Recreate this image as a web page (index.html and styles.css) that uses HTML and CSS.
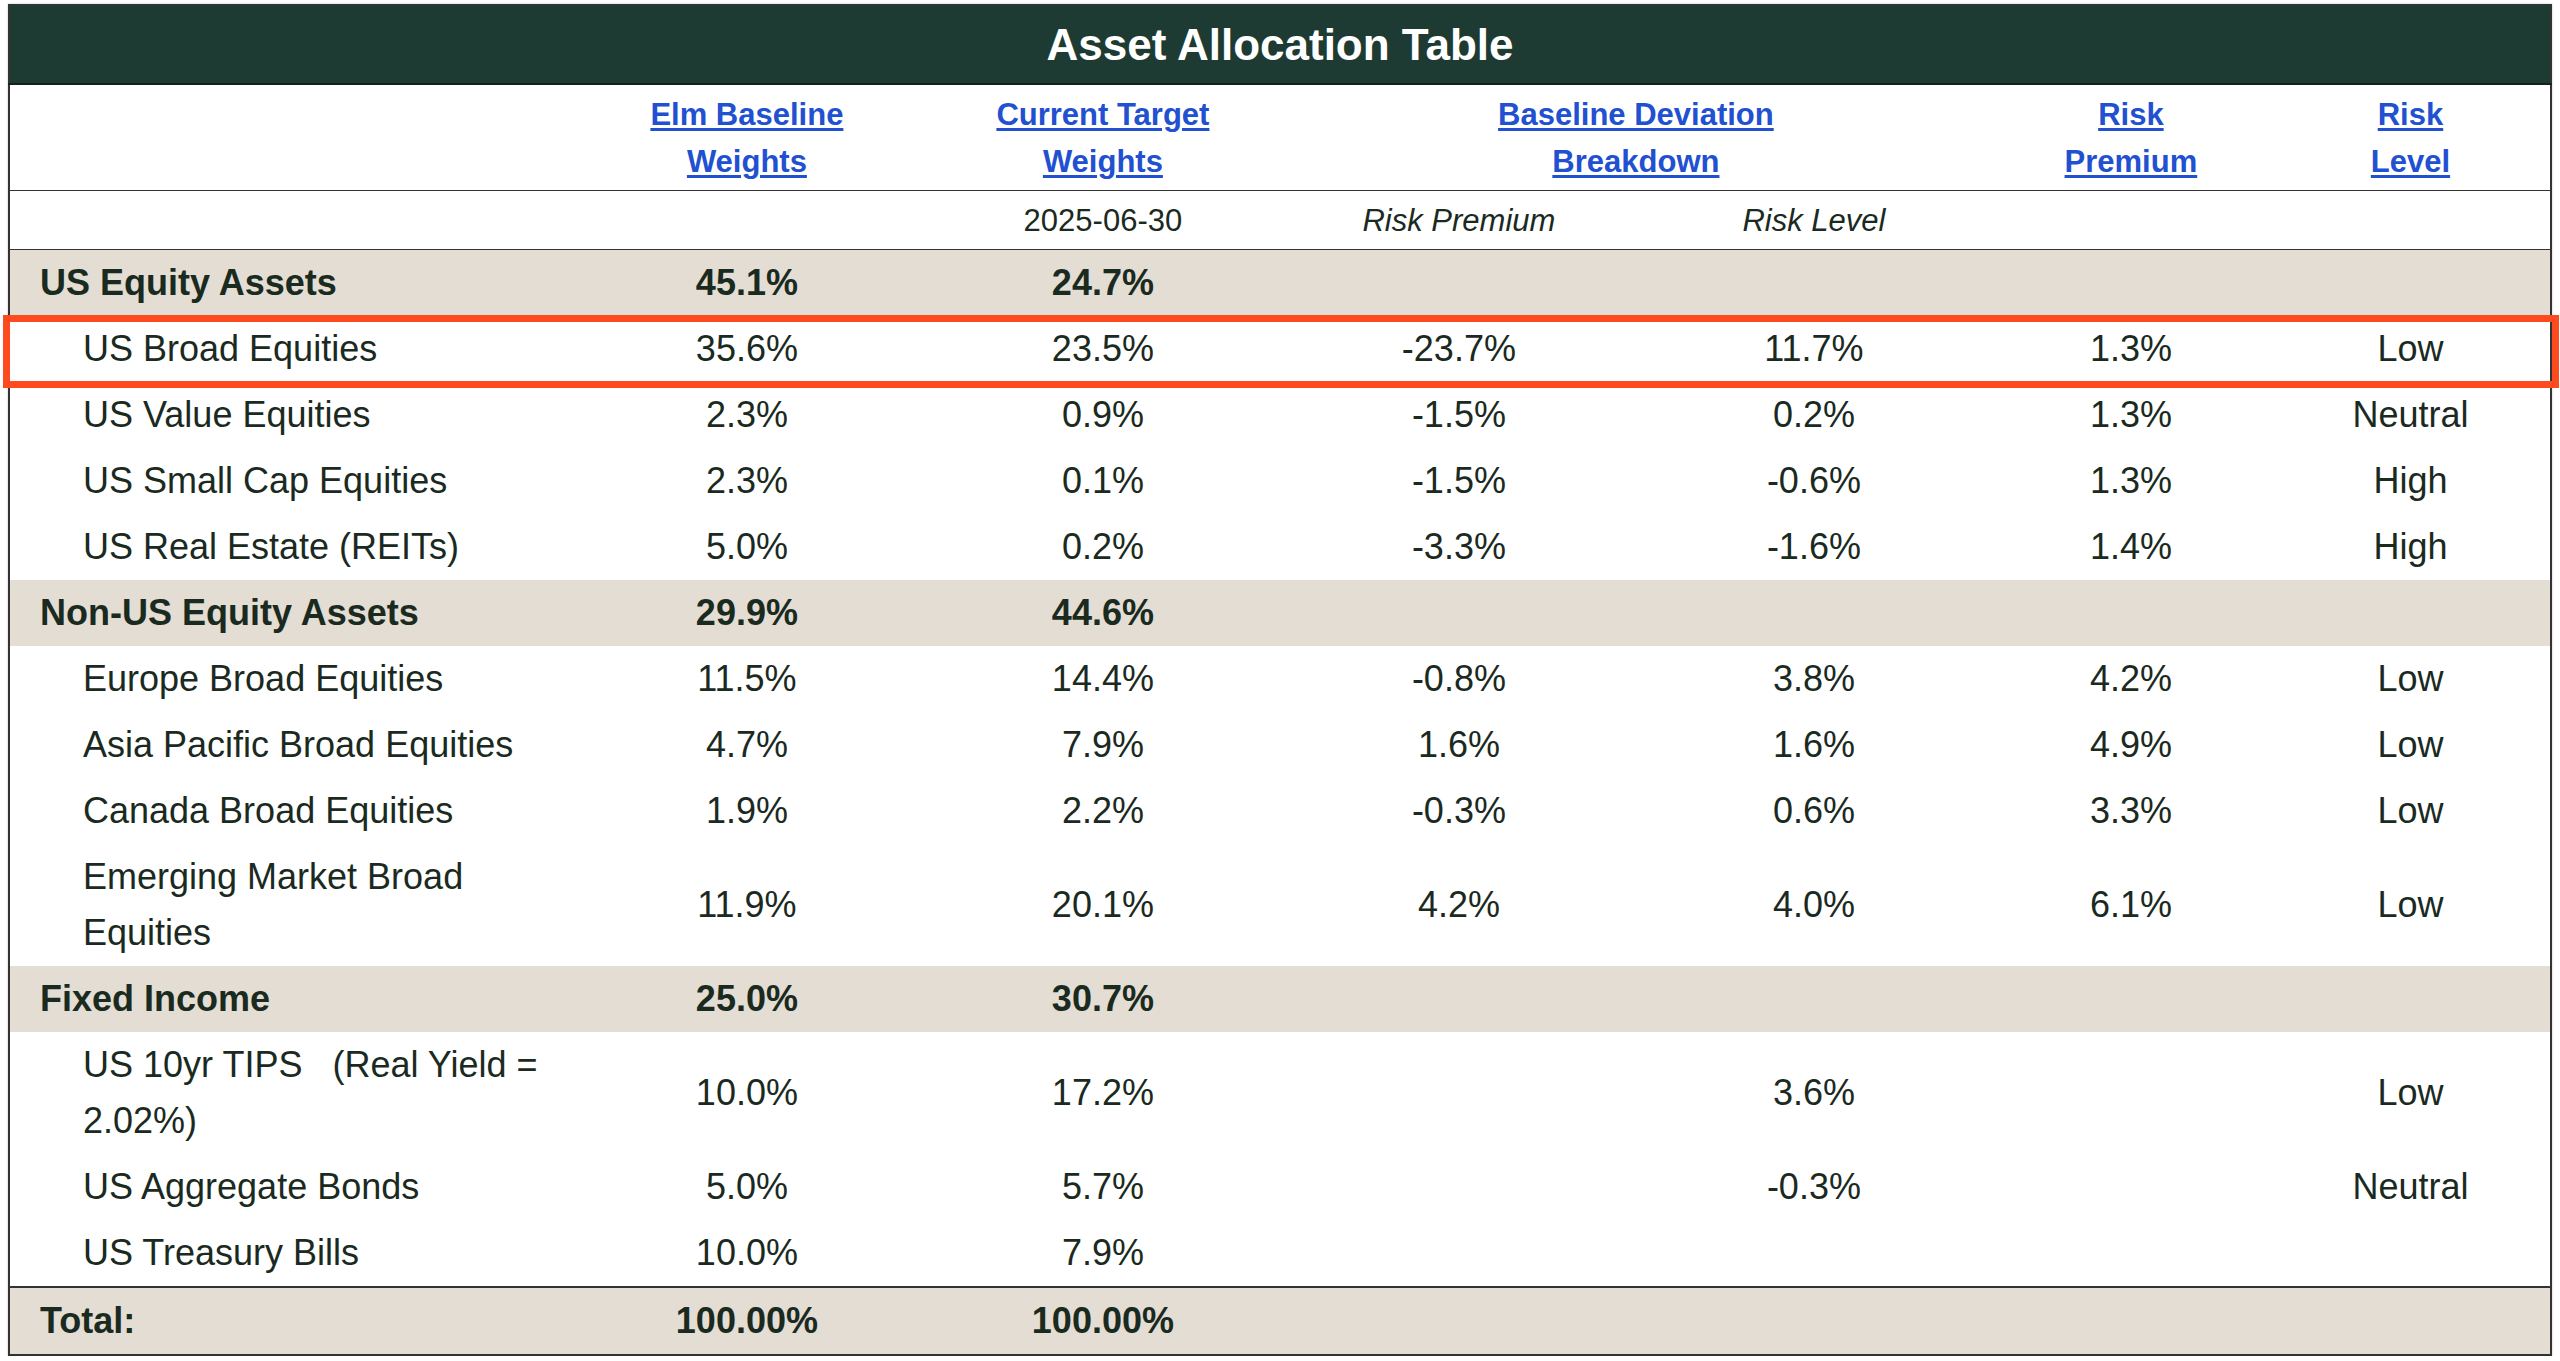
FILE: index.html
```html
<!DOCTYPE html>
<html lang="en">
<head>
<meta charset="utf-8">
<title>Asset Allocation Table</title>
<link rel="stylesheet" href="styles.css">
</head>
<body>
<div class="wrap">
  <table class="alloc">
    <colgroup>
      <col class="c-name">
      <col class="c-w1">
      <col class="c-w2">
      <col class="c-w3">
      <col class="c-w4">
      <col class="c-w5">
      <col class="c-w6">
    </colgroup>
    <thead>
      <tr class="title-row"><th colspan="7" class="title">Asset Allocation Table</th></tr>
      <tr class="head">
        <th></th>
        <th><a href="#">Elm Baseline<br>Weights</a></th>
        <th><a href="#">Current Target<br>Weights</a></th>
        <th colspan="2"><a href="#">Baseline Deviation<br>Breakdown</a></th>
        <th><a href="#">Risk<br>Premium</a></th>
        <th><a href="#">Risk<br>Level</a></th>
      </tr>
      <tr class="sub">
        <td></td>
        <td></td>
        <td>2025-06-30</td>
        <td><em>Risk Premium</em></td>
        <td><em>Risk Level</em></td>
        <td></td>
        <td></td>
      </tr>
    </thead>
    <tbody>
      <tr class="group"><td class="name">US Equity Assets</td><td>45.1%</td><td>24.7%</td><td></td><td></td><td></td><td></td></tr>
      <tr><td class="name child">US Broad Equities</td><td>35.6%</td><td>23.5%</td><td>-23.7%</td><td>11.7%</td><td>1.3%</td><td>Low</td></tr>
      <tr><td class="name child">US Value Equities</td><td>2.3%</td><td>0.9%</td><td>-1.5%</td><td>0.2%</td><td>1.3%</td><td>Neutral</td></tr>
      <tr><td class="name child">US Small Cap Equities</td><td>2.3%</td><td>0.1%</td><td>-1.5%</td><td>-0.6%</td><td>1.3%</td><td>High</td></tr>
      <tr><td class="name child">US Real Estate (REITs)</td><td>5.0%</td><td>0.2%</td><td>-3.3%</td><td>-1.6%</td><td>1.4%</td><td>High</td></tr>
      <tr class="group"><td class="name">Non-US Equity Assets</td><td>29.9%</td><td>44.6%</td><td></td><td></td><td></td><td></td></tr>
      <tr><td class="name child">Europe Broad Equities</td><td>11.5%</td><td>14.4%</td><td>-0.8%</td><td>3.8%</td><td>4.2%</td><td>Low</td></tr>
      <tr><td class="name child">Asia Pacific Broad Equities</td><td>4.7%</td><td>7.9%</td><td>1.6%</td><td>1.6%</td><td>4.9%</td><td>Low</td></tr>
      <tr><td class="name child">Canada Broad Equities</td><td>1.9%</td><td>2.2%</td><td>-0.3%</td><td>0.6%</td><td>3.3%</td><td>Low</td></tr>
      <tr><td class="name child">Emerging Market Broad Equities</td><td>11.9%</td><td>20.1%</td><td>4.2%</td><td>4.0%</td><td>6.1%</td><td>Low</td></tr>
      <tr class="group"><td class="name">Fixed Income</td><td>25.0%</td><td>30.7%</td><td></td><td></td><td></td><td></td></tr>
      <tr><td class="name child">US 10yr TIPS&nbsp;&nbsp;&nbsp;(Real Yield = 2.02%)</td><td>10.0%</td><td>17.2%</td><td></td><td>3.6%</td><td></td><td>Low</td></tr>
      <tr><td class="name child">US Aggregate Bonds</td><td>5.0%</td><td>5.7%</td><td></td><td>-0.3%</td><td></td><td>Neutral</td></tr>
      <tr><td class="name child">US Treasury Bills</td><td>10.0%</td><td>7.9%</td><td></td><td></td><td></td><td></td></tr>
    </tbody>
    <tfoot>
      <tr class="total"><td class="name">Total:</td><td>100.00%</td><td>100.00%</td><td></td><td></td><td></td><td></td></tr>
    </tfoot>
  </table>
  <div class="highlight"></div>
</div>
</body>
</html>
```

FILE: styles.css
```css
html, body {
  margin: 0;
  padding: 0;
  background: #ffffff;
}

body {
  font-family: "Liberation Sans", Arial, Helvetica, sans-serif;
  color: #1b2a1f;
}

.wrap {
  position: relative;
  margin: 4px 8px 0 8px;
}

.alloc {
  width: 100%;
  table-layout: fixed;
  border-collapse: collapse;
  border: 2px solid #333333;
  box-shadow: 0 0 2px rgba(0, 0, 0, 0.25);
  font-size: 36px;
}

.c-w1, .c-w2, .c-w3 { width: 356px; }
.c-w4 { width: 354px; }
.c-w5, .c-w6 { width: 280px; }

.title {
  background: #1e3b33;
  color: #ffffff;
  font-size: 44px;
  font-weight: bold;
  line-height: 77px;
  padding: 0;
  text-align: center;
  border-bottom: 2px solid #16211d;
}

.head th {
  font-size: 31px;
  font-weight: bold;
  line-height: 47px;
  padding: 6px 10px 5px;
  text-align: center;
  vertical-align: middle;
  border-bottom: 1px solid #333333;
}

.head a {
  color: #2150d0;
  text-decoration: underline;
  text-underline-offset: 3px;
}

.sub td {
  font-size: 31px;
  line-height: 47px;
  padding: 6px 10px 5px;
  text-align: center;
  border-bottom: 1px solid #333333;
  color: #1b2a1f;
}

.sub em {
  font-style: italic;
}

tbody td, tfoot td {
  line-height: 56px;
  padding: 5px 10px;
  text-align: center;
  vertical-align: middle;
}

td.name {
  text-align: left;
  padding-left: 30px;
  padding-right: 8px;
}

td.child {
  padding-left: 73px;
}

.group td {
  background: #e3ddd3;
  font-weight: bold;
}

.total td {
  background: #e3ddd3;
  font-weight: bold;
  border-top: 2px solid #333333;
}

.highlight {
  position: absolute;
  top: 311px;
  left: -5px;
  right: -7px;
  height: 73px;
  box-sizing: border-box;
  border: 7px solid #fd4a1f;
  pointer-events: none;
}
```
